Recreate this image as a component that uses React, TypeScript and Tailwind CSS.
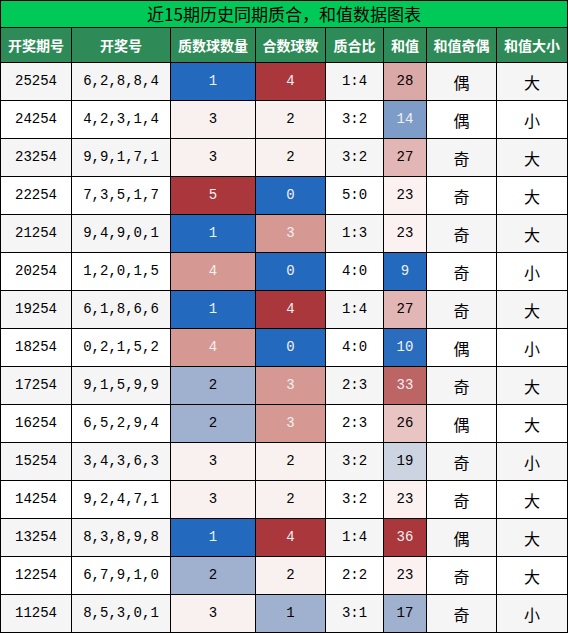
const HEADERS = ["开奖期号", "开奖号", "质数球数量", "合数球数量", "质合比", "和值", "和值奇偶", "和值大小"];

// period, numbers, primes, composites, ratio, sum, parity, size
const ROWS: [string, string, number, number, string, number, string, string][] = [
  ["25254", "6,2,8,8,4", 1, 4, "1:4", 28, "偶", "大"],
  ["24254", "4,2,3,1,4", 3, 2, "3:2", 14, "偶", "小"],
  ["23254", "9,9,1,7,1", 3, 2, "3:2", 27, "奇", "大"],
  ["22254", "7,3,5,1,7", 5, 0, "5:0", 23, "奇", "大"],
  ["21254", "9,4,9,0,1", 1, 3, "1:3", 23, "奇", "大"],
  ["20254", "1,2,0,1,5", 4, 0, "4:0", 9, "奇", "小"],
  ["19254", "6,1,8,6,6", 1, 4, "1:4", 27, "奇", "大"],
  ["18254", "0,2,1,5,2", 4, 0, "4:0", 10, "偶", "小"],
  ["17254", "9,1,5,9,9", 2, 3, "2:3", 33, "奇", "大"],
  ["16254", "6,5,2,9,4", 2, 3, "2:3", 26, "偶", "大"],
  ["15254", "3,4,3,6,3", 3, 2, "3:2", 19, "奇", "小"],
  ["14254", "9,2,4,7,1", 3, 2, "3:2", 23, "奇", "大"],
  ["13254", "8,3,8,9,8", 1, 4, "1:4", 36, "偶", "大"],
  ["12254", "6,7,9,1,0", 2, 2, "2:2", 23, "奇", "大"],
  ["11254", "8,5,3,0,1", 3, 1, "3:1", 17, "奇", "小"],
];

// heat colours keyed by position in each column's range (0..4)
const STEP = [
  "bg-[#2369bd] text-[#f1f1f1]",
  "bg-[#a0b0cf] text-black",
  "bg-[#f8f1f0] text-black",
  "bg-[#d59893] text-[#f1f1f1]",
  "bg-[#a9373b] text-[#f1f1f1]",
];

const SUM: Record<number, string> = {
  9: "bg-[#2369bd] text-[#f1f1f1]",
  10: "bg-[#2a6cbe] text-[#f1f1f1]",
  14: "bg-[#7e9cc8] text-[#f1f1f1]",
  17: "bg-[#a0b0cf] text-black",
  19: "bg-[#ccd3e1] text-black",
  23: "bg-[#faf1f0] text-black",
  26: "bg-[#e8c4c3] text-black",
  27: "bg-[#e2b6b5] text-black",
  28: "bg-[#daa8a7] text-black",
  33: "bg-[#bd6464] text-[#f1f1f1]",
  36: "bg-[#a9373b] text-[#f1f1f1]",
};

const mono = "font-['Liberation_Mono',monospace] text-[14px]";
const cjk = "font-['Noto_Sans_CJK_SC',sans-serif] text-[16px]";

export default function App() {
  return (
    <div className="w-[568px] h-[633px] bg-white">
      <div className="grid grid-cols-[70px_98px_84px_69px_57px_42px_69px_70px] grid-rows-[26px_34px_repeat(15,37px)] gap-px p-px bg-black">
        <div className="col-span-8 bg-[#00c957] flex items-center justify-center text-[17px] text-black font-['Noto_Sans_CJK_SC',sans-serif]">
          近15期历史同期质合，和值数据图表
        </div>
        {HEADERS.map(h => (
          <div
            key={h}
            className="bg-[#2e8b57] flex items-center justify-center text-white font-bold text-[14px] font-['Noto_Sans_CJK_SC',sans-serif]"
          >
            {/* long labels wrap, only the first line shows */}
            <div className="w-full h-[20px] leading-[20px] overflow-hidden text-center">{h}</div>
          </div>
        ))}
        {ROWS.map(([period, nums, prime, comp, ratio, sum, parity, size], i) => {
          const rowBg = i % 2 === 0 ? "bg-[#f5f5f5]" : "bg-white";
          const cell = "flex items-center justify-center";
          return [
            <div key={period + "a"} className={`${cell} ${rowBg} ${mono} text-black`}>{period}</div>,
            <div key={period + "b"} className={`${cell} ${rowBg} ${mono} text-black`}>{nums}</div>,
            <div key={period + "c"} className={`${cell} ${mono} ${STEP[prime - 1]}`}>{prime}</div>,
            <div key={period + "d"} className={`${cell} ${mono} ${STEP[comp]}`}>{comp}</div>,
            <div key={period + "e"} className={`${cell} ${rowBg} ${mono} text-black`}>{ratio}</div>,
            <div key={period + "f"} className={`${cell} ${mono} ${SUM[sum]}`}>{sum}</div>,
            <div key={period + "g"} className={`${cell} ${rowBg} ${cjk} text-black`}>{parity}</div>,
            <div key={period + "h"} className={`${cell} ${rowBg} ${cjk} text-black`}>{size}</div>,
          ];
        })}
      </div>
    </div>
  );
}
